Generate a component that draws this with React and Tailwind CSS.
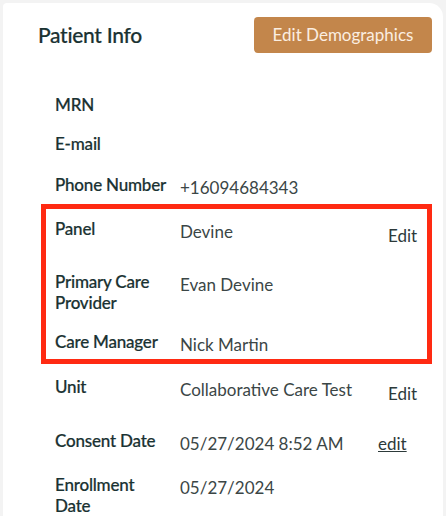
import React from "react";

const font = { fontFamily: "Lato, 'Open Sans', sans-serif" };

function Row({ label, value, action, mt, actionPt = "pt-[7px]", actionW = "w-[44px]", underline }) {
  return (
    <div className={`flex items-start ${mt}`}>
      <div className="w-[125px] shrink-0 text-[17px] leading-[21px] font-medium text-[#1a3232] tracking-[-0.2px] [-webkit-text-stroke:0.2px_#1a3232]">
        {label}
      </div>
      <div className="flex-1 pt-[3px] text-[17px] leading-[21px] text-[#3b4646]">{value}</div>
      {action && (
        <div
          className={`${actionPt} ${actionW} text-[17px] leading-[21px] text-[#2d3a3a] ${
            underline ? "underline" : ""
          }`}
        >
          {action}
        </div>
      )}
    </div>
  );
}

export default function App() {
  return (
    <div className="w-[446px] h-[516px] bg-[#f3f3f3] overflow-hidden pl-[3px] pt-[3px]" style={font}>
      <div className="w-[440px] h-[530px] bg-white rounded-tr-[14px] rounded-tl-[4px]">
        <div className="flex items-center justify-between pl-[35px] pr-[11px] pt-[14px]">
          <h1 className="text-[21px] font-medium text-[#1a3232] tracking-[-0.3px] [-webkit-text-stroke:0.2px_#1a3232]">
            Patient Info
          </h1>
          <button className="w-[178px] h-[36px] rounded-[4px] bg-[#c3864b] text-[#fbeee1] text-[17px]">
            Edit Demographics
          </button>
        </div>
        <div className="pl-[52px] pr-[11px]">
          <Row label="MRN" mt="mt-[41px]" />
          <Row label="E-mail" mt="mt-[18px]" />
          <Row label="Phone Number" value="+16094684343" mt="mt-[20px]" />
        </div>
        <div className="ml-[38px] mr-[11px] mt-[6px] border-[5px] border-[#ff2a12] pl-[9px] pt-[9px] pb-[4px]">
          <Row label="Panel" value="Devine" action="Edit" actionW="w-[39px]" mt="mt-0" />
          <Row
            label={
              <>
                Primary Care
                <br />
                Provider
              </>
            }
            value="Evan Devine"
            mt="mt-[25px]"
          />
          <Row label="Care Manager" value="Nick Martin" mt="mt-[18px]" />
        </div>
        <div className="pl-[52px] pr-[11px]">
          <Row label="Unit" value="Collaborative Care Test" action="Edit" mt="mt-[12px]" />
          <Row
            label="Consent Date"
            value="05/27/2024 8:52 AM"
            action="edit"
            actionPt="pt-[3px]"
            actionW="w-[54px]"
            underline
            mt="mt-[26px]"
          />
          <Row
            label={
              <>
                Enrollment
                <br />
                Date
              </>
            }
            value="05/27/2024"
            mt="mt-[20px]"
          />
        </div>
      </div>
    </div>
  );
}
